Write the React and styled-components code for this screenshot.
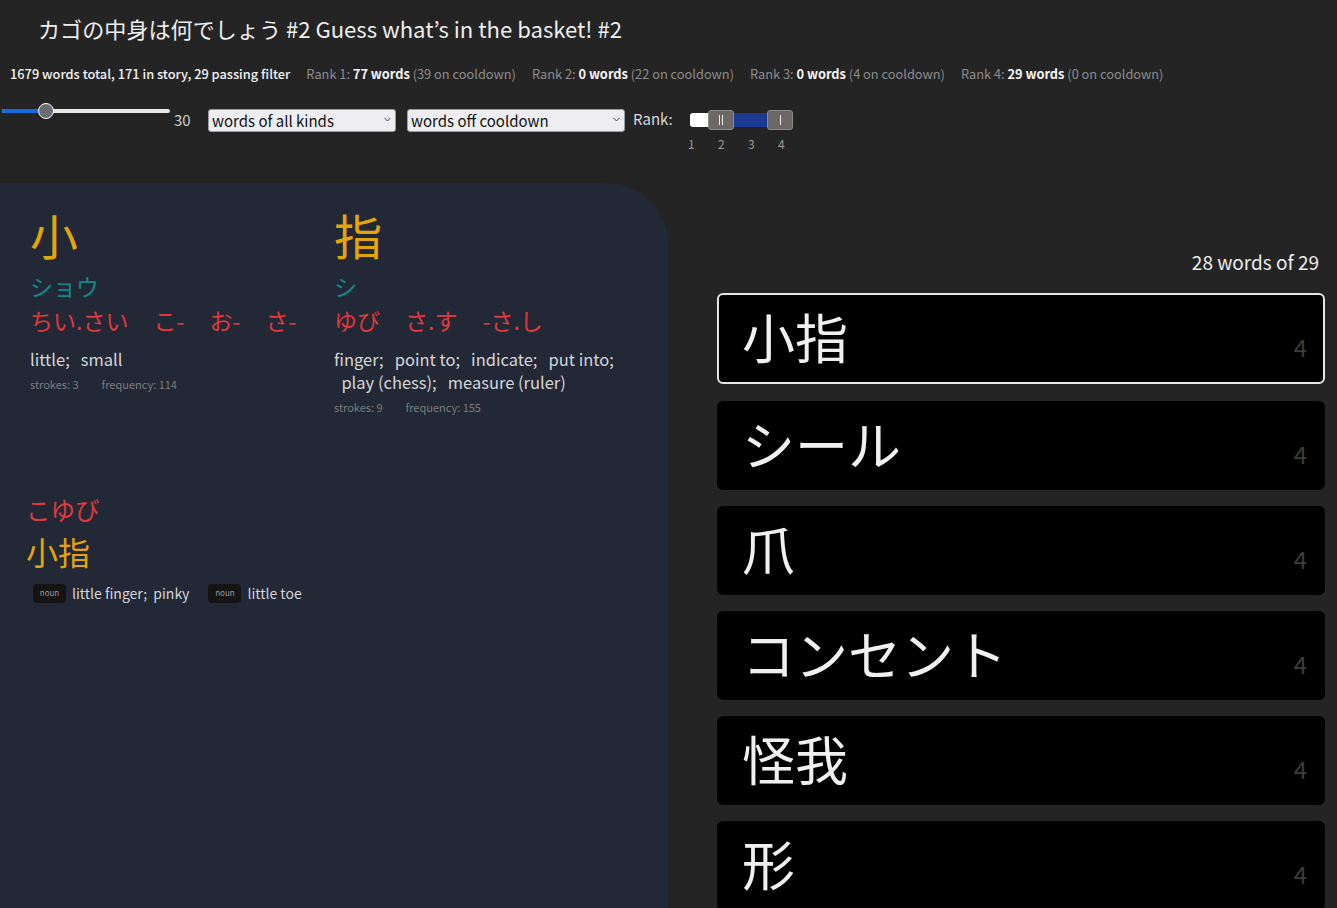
import React from "react";
import styled, { createGlobalStyle } from "styled-components";

const Global = createGlobalStyle`
  html, body { margin: 0; padding: 0; background: #242424; }
  body { font-family: "Noto Sans CJK JP", "Noto Sans", sans-serif; color: #e6e6e6; overflow: hidden; }
  * { box-sizing: border-box; }
`;

const Page = styled.div`
  width: 1337px;
  height: 908px;
  display: flex;
  flex-direction: column;
  overflow: hidden;
`;

const Header = styled.header`
  height: 183px;
  display: flex;
  flex-direction: column;
`;

const Title = styled.h1`
  margin: 13px 0 0 38px;
  font-size: 22.1px;
  font-weight: 400;
  line-height: 30px;
  color: #eeeeee;
`;

const Stats = styled.div`
  margin: 22px 0 0 10px;
  display: flex;
  gap: 16px;
  font-size: 12.8px;
  line-height: 18px;
`;

const StatGroup = styled.span`
  color: ${(p) => (p.$main ? "#f2f2f2" : "#8c8c8c")};
  font-weight: ${(p) => (p.$main ? 500 : 400)};
`;

const Strong = styled.b`
  color: #f4f4f4;
  font-weight: 700;
`;

const Controls = styled.div`
  margin-top: 16px;
  display: flex;
  align-items: flex-start;
  height: 50px;
`;

const RangeWrap = styled.div`
  position: relative;
  width: 168px;
  height: 20px;
  margin-top: 4px;
  margin-left: 2px;
`;

const Track = styled.div`
  position: absolute;
  left: 0;
  right: 0;
  top: 6px;
  height: 4px;
  border-radius: 2px;
  background: #e8e8ea;
`;

const Fill = styled.div`
  position: absolute;
  left: 0;
  top: 6px;
  height: 4px;
  border-radius: 2px;
  background: #1769e0;
`;

const Thumb = styled.div`
  position: absolute;
  top: 0;
  width: 16px;
  height: 16px;
  margin-left: -8px;
  border-radius: 50%;
  background: #6c6c78;
  border: 1.5px solid #ffffff;
`;

const RangeValue = styled.span`
  margin: 11px 0 0 4px;
  font-size: 15px;
  line-height: 20px;
  color: #d0d0d0;
  width: 34px;
`;

const SelectWrap = styled.div`
  position: relative;
  margin-top: 9px;
  margin-right: 11px;
  width: ${(p) => p.$w}px;
  height: 23px;
`;

const Select = styled.select`
  appearance: none;
  width: 100%;
  height: 100%;
  background: #eeeef2;
  color: #111;
  border: 1px solid #9a9aa4;
  border-radius: 3px;
  font-family: "Noto Sans CJK JP", "Noto Sans", sans-serif;
  font-size: 15px;
  padding: 0 0 0 3px;
`;

const Chevron = styled.svg`
  position: absolute;
  right: 5px;
  top: 9px;
  width: 7px;
  height: 5px;
  pointer-events: none;
`;

const RankLabel = styled.span`
  margin: 10px 0 0 -3px;
  font-size: 15px;
  line-height: 20px;
  color: #d8d8d8;
  width: 57px;
`;

const RankBox = styled.div`
  display: flex;
  flex-direction: column;
  margin-top: 11px;
`;

const RankTrack = styled.div`
  position: relative;
  width: 103px;
  height: 20px;
`;

const RankBase = styled.div`
  position: absolute;
  left: 0;
  width: 30px;
  top: 3px;
  height: 14px;
  background: #ffffff;
  border-radius: 3px 0 0 3px;
`;

const RankFill = styled.div`
  position: absolute;
  left: 40px;
  width: 45px;
  top: 3px;
  height: 14px;
  background: #1f3a93;
`;

const RankThumb = styled.div`
  position: absolute;
  top: 0;
  left: ${(p) => p.$x}px;
  width: 26px;
  height: 20px;
  border-radius: 3px;
  background: #6b6867;
  border: 1px solid #8d8a88;
  display: flex;
  align-items: center;
  justify-content: center;
  gap: 2px;
`;

const Grip = styled.i`
  width: 1px;
  height: 10px;
  background: #e8e8e8;
`;

const Ticks = styled.div`
  display: flex;
  margin-top: 7px;
  margin-left: -2px;
  font-size: 12px;
  line-height: 14px;
  color: #9a9a9a;
`;

const Tick = styled.span`
  width: 30px;
`;

const Main = styled.main`
  flex: 1;
  display: flex;
  gap: 49px;
  min-height: 0;
`;

const LeftPanel = styled.section`
  width: 668px;
  background: #222836;
  border-top-right-radius: 62px;
  padding: 22px 0 0 28px;
`;

const KanjiRow = styled.div`
  display: flex;
`;

const KanjiCard = styled.div`
  width: 304px;
  padding-left: 2px;
  height: 289px;
`;

const BigKanji = styled.div`
  font-size: 48px;
  line-height: 58px;
  color: #e3a60a;
`;

const OnYomi = styled.div`
  margin-top: 9px;
  font-size: 23px;
  line-height: 28px;
  color: #14878c;
`;

const KunYomi = styled.div`
  margin-top: 6px;
  display: flex;
  flex-wrap: wrap;
  gap: 0 25px;
  font-size: 23px;
  line-height: 28px;
  color: #e0383c;
`;

const Meanings = styled.div`
  margin-top: 14px;
  font-size: 16.5px;
  line-height: 23px;
  color: #d6d6d6;
`;

const Meta = styled.div`
  margin-top: 5px;
  display: flex;
  gap: 23px;
  font-size: 11px;
  line-height: 16px;
  color: #7d7d7d;
`;

const WordBlock = styled.div`
  margin-left: -2px;
`;

const WordReading = styled.div`
  font-size: 24.5px;
  line-height: 32px;
  color: #e0383c;
`;

const WordKanji = styled.div`
  margin-top: 4px;
  font-size: 32px;
  line-height: 42px;
  color: #e3a60a;
`;

const Senses = styled.div`
  display: flex;
  gap: 19px;
  margin-left: 7px;
  margin-top: 11px;
`;

const Sense = styled.div`
  display: flex;
  align-items: center;
  gap: 6px;
  font-size: 14px;
  line-height: 20px;
  color: #d6d6d6;
`;

const Tag = styled.span`
  width: 33px;
  height: 19px;
  border-radius: 4px;
  background: #141414;
  color: #9a9a9a;
  font-size: 8px;
  display: flex;
  align-items: center;
  justify-content: center;
`;

const RightPanel = styled.section`
  width: 608px;
  display: flex;
  flex-direction: column;
`;

const Count = styled.div`
  margin-top: 65px;
  text-align: right;
  padding-right: 6px;
  font-size: 19px;
  line-height: 28px;
  color: #ececec;
`;

const WordList = styled.div`
  margin-top: 17px;
  display: flex;
  flex-direction: column;
  gap: 16px;
`;

const WordCard = styled.div`
  height: ${(p) => (p.$active ? 91 : 89)}px;
  margin-bottom: ${(p) => (p.$active ? 1 : 0)}px;
  flex-shrink: 0;
  background: #000;
  border-radius: 6px;
  border: 2px solid ${(p) => (p.$active ? "#e6e6e6" : "#000")};
  display: flex;
  align-items: center;
  justify-content: space-between;
  padding: 0 16px 0 23px;
`;

const CardText = styled.span`
  font-size: 53px;
  line-height: 62px;
  color: #f0f0f0;
  margin-top: -6px;
`;

const CardRank = styled.span`
  font-size: 24px;
  line-height: 30px;
  color: #3c3c3c;
  margin-top: 16px;
`;

const kanji = [
  {
    k: "小",
    on: ["ショウ"],
    kun: ["ちい.さい", "こ-", "お-", "さ-"],
    meanings: ["little", "small"],
    strokes: 3,
    freq: 114,
  },
  {
    k: "指",
    on: ["シ"],
    kun: ["ゆび", "さ.す", "-さ.し"],
    meanings: ["finger", "point to", "indicate", "put into", "play (chess)", "measure (ruler)"],
    strokes: 9,
    freq: 155,
  },
];

const words = ["小指", "シール", "爪", "コンセント", "怪我", "形"];

function Dropdown({ w, value, label }) {
  return (
    <SelectWrap $w={w}>
      <Select defaultValue={value}>
        <option value={value}>{label}</option>
      </Select>
      <Chevron viewBox="0 0 7 5">
        <path d="M0.5 0.8 L3.5 4 L6.5 0.8" fill="none" stroke="#444" strokeWidth="1" />
      </Chevron>
    </SelectWrap>
  );
}

export default function App() {
  return (
    <Page>
      <Global />
      <Header>
        <Title>カゴの中身は何でしょう #2 Guess what’s in the basket! #2</Title>
        <Stats>
          <StatGroup $main>1679 words total, 171 in story, 29 passing filter</StatGroup>
          <StatGroup>Rank 1: <Strong>77 words</Strong> (39 on cooldown)</StatGroup>
          <StatGroup>Rank 2: <Strong>0 words</Strong> (22 on cooldown)</StatGroup>
          <StatGroup>Rank 3: <Strong>0 words</Strong> (4 on cooldown)</StatGroup>
          <StatGroup>Rank 4: <Strong>29 words</Strong> (0 on cooldown)</StatGroup>
        </Stats>
        <Controls>
          <RangeWrap>
            <Track />
            <Fill style={{ width: "44px" }} />
            <Thumb style={{ left: "44px" }} />
          </RangeWrap>
          <RangeValue>30</RangeValue>
          <Dropdown w={188} value="all" label="words of all kinds" />
          <Dropdown w={218} value="off" label="words off cooldown" />
          <RankLabel>Rank:</RankLabel>
          <RankBox>
            <RankTrack>
              <RankBase />
              <RankFill />
              <RankThumb $x={18}><Grip /><Grip /></RankThumb>
              <RankThumb $x={77}><Grip /></RankThumb>
            </RankTrack>
            <Ticks>
              <Tick>1</Tick>
              <Tick>2</Tick>
              <Tick>3</Tick>
              <Tick>4</Tick>
            </Ticks>
          </RankBox>
        </Controls>
      </Header>
      <Main>
        <LeftPanel>
          <KanjiRow>
            {kanji.map((c) => (
              <KanjiCard key={c.k}>
                <BigKanji>{c.k}</BigKanji>
                <OnYomi>{c.on.join(" ")}</OnYomi>
                <KunYomi>
                  {c.kun.map((r) => (
                    <span key={r}>{r}</span>
                  ))}
                </KunYomi>
                <Meanings>{c.meanings.join("; \u00a0\u00a0")}</Meanings>
                <Meta>
                  <span>strokes: {c.strokes}</span>
                  <span>frequency: {c.freq}</span>
                </Meta>
              </KanjiCard>
            ))}
          </KanjiRow>
          <WordBlock>
            <WordReading>こゆび</WordReading>
            <WordKanji>小指</WordKanji>
            <Senses>
              <Sense>
                <Tag>noun</Tag>
                <span>little finger;&nbsp; pinky</span>
              </Sense>
              <Sense>
                <Tag>noun</Tag>
                <span>little toe</span>
              </Sense>
            </Senses>
          </WordBlock>
        </LeftPanel>
        <RightPanel>
          <Count>28 words of 29</Count>
          <WordList>
            {words.map((w, i) => (
              <WordCard key={w} $active={i === 0}>
                <CardText>{w}</CardText>
                <CardRank>4</CardRank>
              </WordCard>
            ))}
          </WordList>
        </RightPanel>
      </Main>
    </Page>
  );
}
